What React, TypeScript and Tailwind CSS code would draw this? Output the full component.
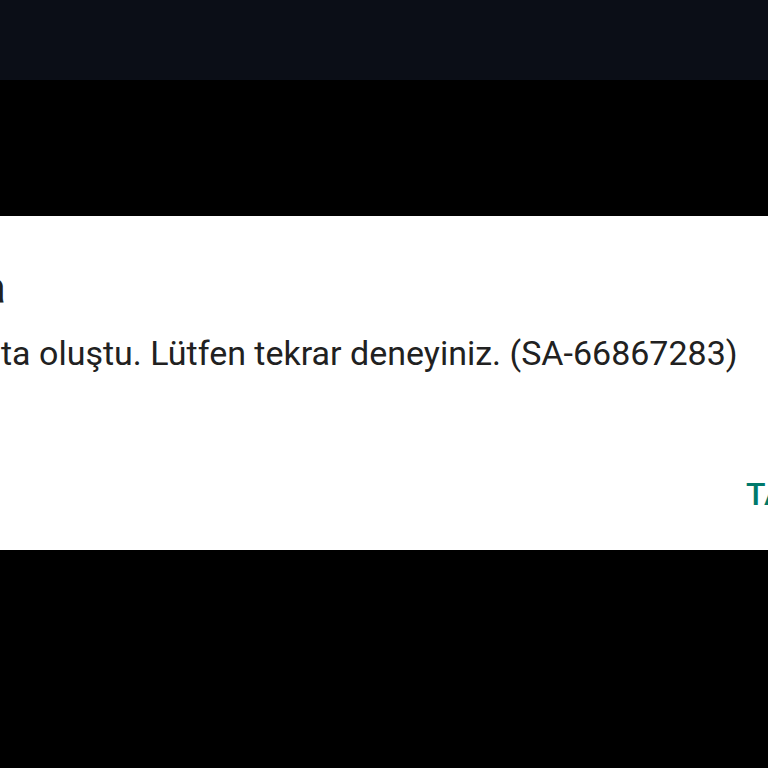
export default function App() {
  return (
    <div className="flex h-[768px] w-[768px] flex-col overflow-hidden bg-black font-['Roboto',sans-serif]">
      <div className="h-[80px] shrink-0 bg-[#0b0e17]" />
      <div className="h-[136px] shrink-0 bg-black" />
      <div className="flex h-[334px] shrink-0 flex-col overflow-hidden bg-white">
        <div className="mt-[50px] flex h-[44px] w-[6px] justify-end whitespace-nowrap text-[44px] leading-[44px] text-[#212121]">
          Hata
        </div>
        <p className="mt-[23px] whitespace-nowrap pl-[1px] text-[34px] leading-[40px] text-[#212121]">
          ta oluştu. Lütfen tekrar deneyiniz. (SA-66867283)
        </p>
        <div className="mt-[101px] whitespace-nowrap pl-[746px] text-[32px] font-medium leading-[40px] text-[#00796b]">
          TAMAM
        </div>
      </div>
      <div className="flex-1 bg-black" />
    </div>
  );
}
